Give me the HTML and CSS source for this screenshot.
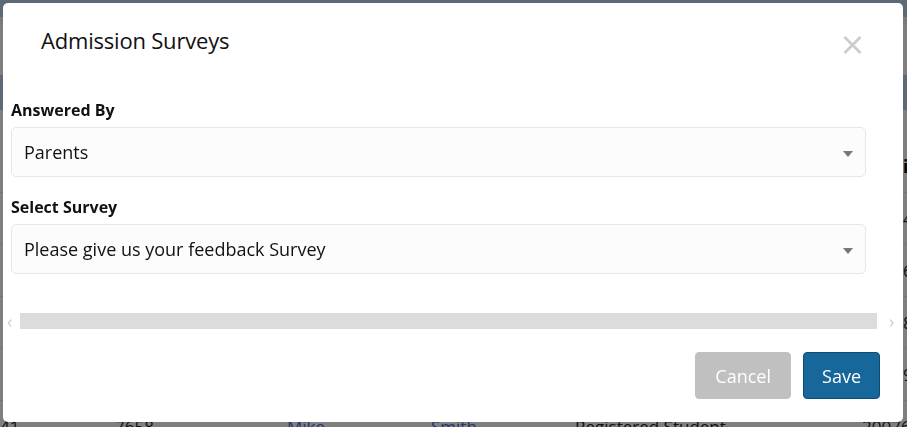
FILE: index.html
```html
<!DOCTYPE html>
<html lang="en">

<head>
    <meta charset="UTF-8">
    <title>Admission Surveys</title>
    <link rel="stylesheet" href="styles.css">
</head>

<body>
    <div class="page">
        <div class="navbar"></div>
        <div class="subbar"></div>
        <div class="toolbar"></div>
        <div class="table-head"></div>
        <div class="table-gap"></div>

        <div class="row">
            <span></span><span></span><span></span><span></span><span></span><span></span><span class="bold">i</span>
        </div>
        <div class="row">
            <span></span><span>7612</span><span class="link">Anna</span><span class="link">Lopez</span><span>Registered Student</span><span></span><span>4</span>
        </div>
        <div class="row">
            <span></span><span>7630</span><span class="link">Jake</span><span class="link">Brown</span><span>Registered Student</span><span></span><span>6</span>
        </div>
        <div class="row">
            <span></span><span>7644</span><span class="link">Lily</span><span class="link">Evans</span><span>Registered Student</span><span></span><span>8</span>
        </div>
        <div class="row">
            <span></span><span>7651</span><span class="link">Noah</span><span class="link">Green</span><span>Registered Student</span><span></span><span>9</span>
        </div>
        <div class="row">
            <span>41</span><span>7658</span><span class="link">Mike</span><span class="link">Smith</span><span>Registered Student</span><span>20076</span><span></span>
        </div>
    </div>

    <div class="backdrop"></div>

    <div class="modal">
        <div class="modal-header">
            <h3 class="modal-title">Admission Surveys</h3>
            <svg class="close" width="19" height="18" viewBox="0 0 19 18">
                <path d="M1.5 1 L17.5 17 M17.5 1 L1.5 17" stroke="#cbcbcb" stroke-width="2.6" fill="none" />
            </svg>
        </div>

        <div class="modal-body">
            <label class="field-label">Answered By</label>
            <div class="select">
                <span>Parents</span>
                <span class="caret"></span>
            </div>

            <label class="field-label second">Select Survey</label>
            <div class="select">
                <span>Please give us your feedback Survey</span>
                <span class="caret"></span>
            </div>
        </div>

        <div class="scroll-row">
            <span class="arrow">&#8249;</span>
            <div class="track"></div>
            <span class="arrow right">&#8250;</span>
        </div>

        <div class="modal-footer">
            <button class="btn btn-cancel">Cancel</button>
            <button class="btn btn-save">Save</button>
        </div>
    </div>
</body>

</html>
```

FILE: styles.css
```css
body {
    margin: 0;
    font-family: "Open Sans", "Liberation Sans", sans-serif;
    overflow: hidden;
}

.page {
    width: 907px;
    height: 427px;
    background: #fff;
    overflow: hidden;
}

.navbar {
    height: 17px;
    background: #b8d4ee;
}

.subbar {
    height: 8px;
    background: #f2f4f6;
}

.toolbar {
    height: 50px;
}

.table-head {
    height: 35px;
    background: #b8d4ee;
}

.table-gap {
    height: 31px;
}

.row {
    display: grid;
    grid-template-columns: 115px 172px 144px 144px 287px 41px 1fr;
    height: 51px;
    border-bottom: 1px solid #e4e4e4;
    align-items: center;
    font-size: 17px;
    color: #222;
}

.row .link {
    color: #3a6fd8;
}

.row .bold {
    font-weight: 700;
    color: #000;
}

.backdrop {
    position: fixed;
    inset: 0;
    background: rgba(0, 0, 0, 0.5);
}

.modal {
    position: fixed;
    top: 3px;
    left: 3px;
    width: 900px;
    height: 419px;
    background: #fff;
    border-radius: 5px;
    display: flex;
    flex-direction: column;
}

.modal-header {
    display: flex;
    justify-content: space-between;
    align-items: flex-start;
    padding: 22px 41px 0 38px;
}

.modal-title {
    margin: 0;
    font-size: 22px;
    font-weight: 400;
    line-height: 30px;
    color: #111;
    letter-spacing: -0.2px;
}

.close {
    margin-top: 11px;
}

.modal-body {
    padding: 44px 37px 0 8px;
}

.field-label {
    display: block;
    font-size: 16px;
    font-weight: 700;
    line-height: 22px;
    color: #111;
    margin-bottom: 6px;
}

.field-label.second {
    margin-top: 19px;
}

.select {
    box-sizing: content-box;
    height: 47px;
    border: 1px solid #e8e6e6;
    border-radius: 5px;
    background: #fdfcfc;
    display: flex;
    align-items: center;
    justify-content: space-between;
    padding: 0 12px 1px 12px;
    font-size: 18px;
    color: #111;
}

.caret {
    width: 0;
    height: 0;
    border-left: 5px solid transparent;
    border-right: 5px solid transparent;
    border-top: 6px solid #777;
    margin-top: 4px;
}

.scroll-row {
    display: flex;
    align-items: center;
    height: 16px;
    margin-top: 39px;
}

.arrow {
    color: #cfcfcf;
    font-size: 18px;
    line-height: 16px;
    margin-left: 4px;
    width: 10px;
}

.arrow.right {
    margin-left: 12px;
}

.track {
    width: 857px;
    height: 16px;
    background: #dcdcdc;
    margin-left: 3px;
}

.modal-footer {
    display: flex;
    justify-content: flex-end;
    gap: 12px;
    padding: 23px 23px 0 0;
}

.btn {
    height: 47px;
    padding: 0 18px;
    font-family: "Open Sans", "Liberation Sans", sans-serif;
    font-size: 18px;
    color: #fff;
    border-radius: 4px;
    border: 1px solid transparent;
}

.btn-cancel {
    background: #c0c0c0;
    border-color: #c0c0c0;
    padding: 0 19px;
}

.btn-save {
    background: #17679b;
    border-color: #0f4c75;
}
```
